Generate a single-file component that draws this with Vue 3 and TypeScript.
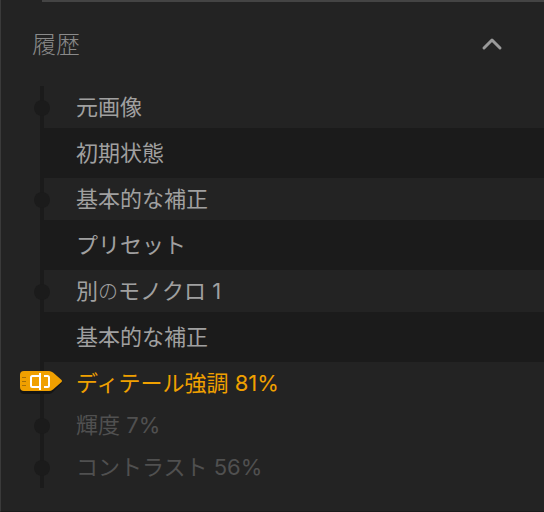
<script setup lang="ts">
import { ref } from 'vue'

interface Step {
  label: string
  kind: 'group' | 'change' | 'current' | 'undone'
}

const open = ref(true)
const steps: Step[] = [
  { label: '元画像', kind: 'group' },
  { label: '初期状態', kind: 'change' },
  { label: '基本的な補正', kind: 'group' },
  { label: 'プリセット', kind: 'change' },
  { label: '別のモノクロ 1', kind: 'group' },
  { label: '基本的な補正', kind: 'change' },
  { label: 'ディテール強調 81%', kind: 'current' },
  { label: '輝度 7%', kind: 'undone' },
  { label: 'コントラスト 56%', kind: 'undone' },
]

// The particle is set lighter than the words around it.
const parts = (label: string): string[] => label.split(/(の)/)
</script>

<template>
  <section class="panel">
    <div class="divider"></div>
    <h2 class="heading">
      <button class="toggle" type="button" :aria-expanded="open" @click="open = !open">
        <span>履歴</span>
        <svg class="chevron" :class="{ closed: !open }" width="24" height="16" viewBox="0 0 24 16" aria-hidden="true">
          <path d="M4 12 L12 4 L20 12" />
        </svg>
      </button>
    </h2>
    <ol v-if="open" class="steps">
      <li v-for="(step, i) in steps" :key="i" class="step" :class="step.kind">
        <button class="row" type="button"><span v-for="(part, n) in parts(step.label)" :key="n" :class="{ particle: part === 'の' }">{{ part }}</span></button>
        <span v-if="step.kind === 'group' || step.kind === 'undone'" class="dot"></span>
        <svg v-if="step.kind === 'current'" class="marker" width="46" height="28" viewBox="0 0 46 28" aria-hidden="true">
          <path class="shade" d="M5 6 H30 Q32 6 34 7.500 L43 15 L34 24 Q32 26 30 26 H5 Q1 26 1 22 V10 Q1 6 5 6 Z" />
          <path class="tag" d="M5 3 H30 Q32 3 34 4.500 L42 11.500 Q44 13 42 14.500 L34 21.500 Q32 23 30 23 H5 Q1 23 1 19 V7 Q1 3 5 3 Z" />
          <path class="grip" d="M3 9.500 H7 M3 13.500 H7 M3 17.500 H7" />
          <path class="glyph" d="M21 8 H13.500 Q12 8 12 9.500 V17.500 Q12 19 13.500 19 H21 M21 5 V22 M25 8 H28.500 Q30 8 30 9.500 V17.500 Q30 19 28.500 19 H25" />
        </svg>
      </li>
    </ol>
  </section>
</template>

<style>
body {
  background: #232323;
}
</style>

<style scoped>
.panel {
  box-sizing: border-box;
  min-height: 100vh;
  border-left: 1px solid #3a3a3a;
  border-bottom: 1px solid #1b1b1b;
  background: #232323;
  color: #a0a0a0;
  font-family: Inter, "Noto Sans CJK JP", sans-serif;
}

.divider {
  height: 2px;
  margin-left: 41px;
  background: #444;
}

.heading {
  margin: 0;
  font-size: 24px;
  font-weight: 300;
}

button {
  border: 0;
  background: none;
  color: inherit;
  font: inherit;
  text-align: left;
  cursor: pointer;
}

.toggle {
  display: flex;
  align-items: center;
  justify-content: space-between;
  width: 100%;
  height: 84px;
  padding: 0 40px 0 31px;
  color: #8a8a8a;
}

.toggle span {
  padding-bottom: 4px;
}

.chevron {
  fill: none;
  stroke: #999;
  stroke-width: 3;
  stroke-linecap: round;
  stroke-linejoin: round;
}

.chevron.closed {
  transform: rotate(180deg);
}

.steps {
  margin: 0;
  padding: 0 0 0 39px;
  list-style: none;
}

.step {
  position: relative;
  border-left: 4px solid #1b1b1b;
  font-size: 22px;
}

.row {
  display: block;
  width: 100%;
  height: 42px;
  padding: 0 0 0 32px;
  line-height: 42px;
  white-space: nowrap;
}

.change .row {
  height: 50px;
  background: #1b1b1b;
  line-height: 50px;
}

.particle {
  font-size: 20px;
  font-weight: 300;
  line-height: 1;
}

.current {
  color: #f0a000;
}

.undone {
  color: #505050;
}

.dot {
  position: absolute;
  top: 14px;
  left: -10px;
  width: 16px;
  height: 16px;
  border-radius: 50%;
  background: #1b1b1b;
}

.marker {
  position: absolute;
  top: 6px;
  left: -25px;
}

.shade {
  fill: #151515;
}

.tag {
  fill: #f0a000;
}

.grip {
  fill: none;
  stroke: #a87008;
  stroke-width: 1;
}

.glyph {
  fill: none;
  stroke: #fff;
  stroke-width: 2;
}
</style>
